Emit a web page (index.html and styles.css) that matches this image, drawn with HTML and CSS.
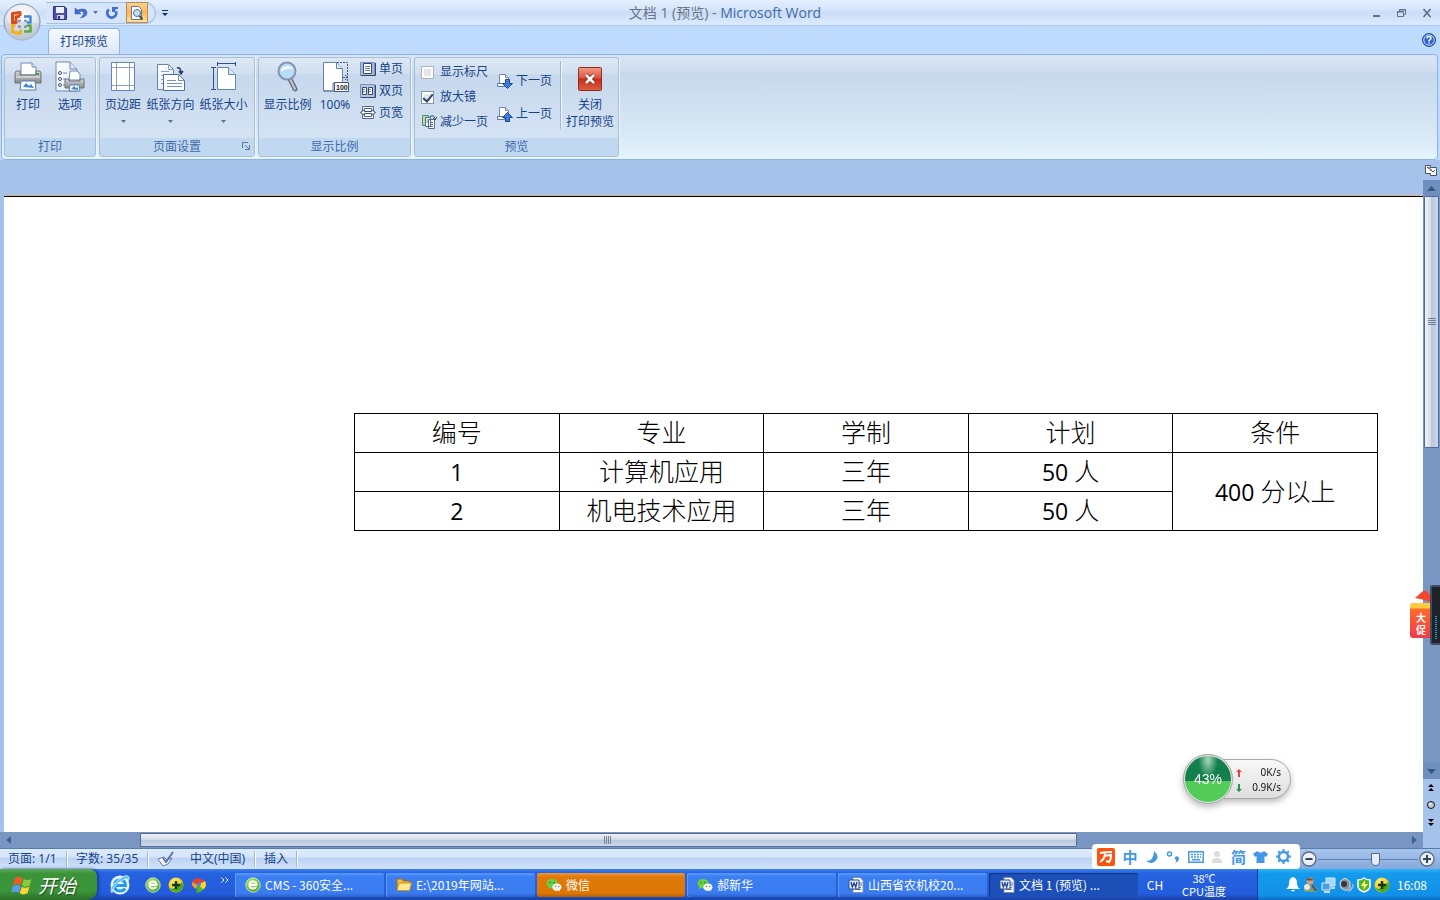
FILE: index.html
```html
<!DOCTYPE html>
<html lang="zh-CN">
<head>
<meta charset="utf-8">
<title>文档 1 (预览) - Microsoft Word</title>
<link rel="stylesheet" href="styles.css">
</head>
<body>
<svg class="defs" aria-hidden="true">
  <defs>
    <linearGradient id="paper" x1="0" y1="0" x2="1" y2="1"><stop offset="0" stop-color="#fff"/><stop offset="1" stop-color="#dfe8f6"/></linearGradient>
    <linearGradient id="metal" x1="0" y1="0" x2="0" y2="1"><stop offset="0" stop-color="#d9d9da"/><stop offset="1" stop-color="#86888d"/></linearGradient>
    <linearGradient id="redbox" x1="0" y1="0" x2="0" y2="1"><stop offset="0" stop-color="#f19a84"/><stop offset=".45" stop-color="#dd5540"/><stop offset=".5" stop-color="#c82d1b"/><stop offset="1" stop-color="#dc6040"/></linearGradient>
    <radialGradient id="orb" cx=".5" cy=".3" r=".7"><stop offset="0" stop-color="#fff"/><stop offset=".6" stop-color="#e3e7ee"/><stop offset="1" stop-color="#a7b4c8"/></radialGradient>
    <radialGradient id="lime" cx=".4" cy=".3" r=".8"><stop offset="0" stop-color="#b8ee70"/><stop offset="1" stop-color="#3c9e1e"/></radialGradient>
    <radialGradient id="gold" cx=".4" cy=".3" r=".8"><stop offset="0" stop-color="#fff36a"/><stop offset="1" stop-color="#dcae00"/></radialGradient>
    <symbol id="i-printer" viewBox="0 0 32 32">
      <path d="M9 2h11l4 4v8H9z" fill="#fff" stroke="#7188b5"/><path d="M20 2v4h4" fill="#dce6f5" stroke="#7188b5"/>
      <path d="M3 12q0-2 2-2h3v4h16v-4h3q2 0 2 2v10H3z" fill="url(#metal)" stroke="#707276"/>
      <path d="M4 16h24" stroke="#eee"/><path d="M24 13h3" stroke="#3b9e37" stroke-width="2"/>
      <path d="M9 20h14l1 9H8z" fill="#fff" stroke="#5579ad"/><path d="M11 26l3-4 3 3 2-2 3 4z" fill="#3d8ad2"/>
    </symbol>
    <symbol id="i-options" viewBox="0 0 32 32">
      <path d="M2 1h14l7 7v22H2z" fill="url(#paper)" stroke="#7188b5"/><path d="M16 1v7h7" fill="#dce6f5" stroke="#7188b5"/>
      <g fill="#fff" stroke="#44516e"><circle cx="6" cy="12" r="1.5"/><circle cx="6" cy="18" r="1.5"/><circle cx="6" cy="24" r="1.5"/></g>
      <path d="M9 12h4M9 18h3M9 24h3" stroke="#7188b5"/>
      <path d="M16 10h7l3 3v6H15z" fill="#fff" stroke="#7188b5"/><path d="M11 18h4v2h11v-2h4v9H11z" fill="url(#metal)" stroke="#707276"/><path d="M16 24h9l1 6H15z" fill="#fff" stroke="#5579ad"/><path d="M17 28l3-3 2 2 2-1v3z" fill="#3d8ad2"/>
    </symbol>
    <symbol id="i-margins" viewBox="0 0 32 32">
      <path d="M4.500 1.500h23v28h-23z" fill="#fff" stroke="#6583b5"/><path d="M9.500 2v27M22.500 2v27M5 6.500h22M5 24.500h22" stroke="#8aa0c8"/>
    </symbol>
    <symbol id="i-orient" viewBox="0 0 32 32">
      <path d="M2.500 3.500h11l5 5v20h-16z" fill="url(#paper)" stroke="#6583b5"/><path d="M13.500 3.500v5h5M6 10.500h8M6 14.500h3M6 18.500h2M6 22.500h2" fill="none" stroke="#8aa0c8"/>
      <path d="M8.500 13.500h15l6 6v10h-21z" fill="#fff" stroke="#4f6da5"/><path d="M23.500 13.500v6h6M12 19.500h9M12 22.500h15M12 25.500h15" fill="none" stroke="#7890bd"/>
      <path d="M22 7q4-1 4 5M24 10l2 3 2-3" fill="none" stroke="#273d70" stroke-width="1.500"/>
    </symbol>
    <symbol id="i-size" viewBox="0 0 32 32">
      <path d="M9.500 6.500h11l7 7v15h-18z" fill="#fff" stroke="#6583b5"/><path d="M20.500 6.500v7h7" fill="#dce6f5" stroke="#6583b5"/>
      <path d="M9 2.500h19M9.500 1v4M27.500 1v4M5.500 6v23M3 6.500h5M3 28.500h5" stroke="#334f87"/>
    </symbol>
    <symbol id="i-zoom" viewBox="0 0 32 32">
      <path d="M18 18l5 10" stroke="#68717c" stroke-width="5" stroke-linecap="round"/><path d="M18 18l5 10" stroke="#bec8d2" stroke-width="2" stroke-linecap="round"/>
      <circle cx="15" cy="10" r="8.500" fill="#b9dcf7" stroke="#8294b0" stroke-width="2"/><path d="M9 11q0-6 7-6 4 0 5 3-7-1-12 3z" fill="#f3faff"/>
    </symbol>
    <symbol id="i-100" viewBox="0 0 32 32">
      <path d="M4.500 30V1.500h13l6 6V22H14v8z" fill="#fff" stroke="#6583b5"/><path d="M17.500 1.500v6h6" fill="#dce6f5" stroke="#6583b5"/>
      <path d="M18 1.500h10.500V22M5 30h11M24 16.500h5M26 14l3 2-3 3" fill="none" stroke="#43587f" stroke-dasharray="2 1"/>
      <path d="M15.500 21.500h14v9h-14z" fill="#fff" stroke="#43587f"/><text x="17" y="29" font-size="7" font-weight="700" font-family="Liberation Sans" fill="#222">100</text>
    </symbol>
    <symbol id="i-one" viewBox="0 0 16 16"><path d="M.5 1.500h14v13H.5z" fill="#a8bddd" stroke="#7a92bb"/><path d="M1 14.500h14.500V2" fill="none" stroke="#35486f"/><path d="M3.500 2.500h8v10h-8z" fill="#fff" stroke="#35486f"/><path d="M5 5.500h5M5 7.500h5M5 9.500h5" stroke="#667da8"/></symbol>
    <symbol id="i-two" viewBox="0 0 16 16"><path d="M.5 1.500h14v13H.5z" fill="#b4c7e4" stroke="#7a92bb"/><path d="M1 14.500h14.500V2" fill="none" stroke="#35486f"/><path d="M2.500 4.500h4v7h-4zM8.500 4.500h4v7h-4z" fill="#fff" stroke="#35486f"/><path d="M3 6.500h2M3 8.500h2M9 6.500h2M9 8.500h2" stroke="#667da8"/></symbol>
    <symbol id="i-wide" viewBox="0 0 16 16"><path d="M2.500 1.500h11v12h-11z" fill="#fff" stroke="#536e9d"/><path d="M4 3.500h8M4 11.500h8" stroke="#536e9d"/><path d="M.5 7.500l4-3v2h7v-2l4 3-4 3v-2h-7v2z" fill="#f6faff" stroke="#35486f"/></symbol>
    <symbol id="i-shrink" viewBox="0 0 16 16"><path d="M1.500 1.500h6v10h-6z" fill="#b5dfa9" stroke="#55875c"/><path d="M4.500 3.500h5v9h-5zM7.500 5.500h6v9h-6z" fill="#fff" stroke="#506b97"/><path d="M9 8.500h3M9 10.500h3M9 12.500h3M5.500 6h2M5.500 8h2" stroke="#506b97"/><path d="M9 2.500q4-2 5 2M12 4l2 2 2-3" fill="none" stroke="#253961"/></symbol>
    <symbol id="i-next" viewBox="0 0 16 16"><path d="M2.500 1.500h6l3 3v7h-9z" fill="#fff" stroke="#7188b5"/><path d="M8.500 1.500v3h3" fill="#dce6f5" stroke="#7188b5"/><path d="M.5 10.500h7v3h-7z" fill="#fff" stroke="#5879af"/><path d="M8.500 6.500h4v4h3L10.500 15.500 5.500 10.500h3z" fill="#3f7bd4" stroke="#174a9c"/></symbol>
    <symbol id="i-prev" viewBox="0 0 16 16"><path d="M2.500 1.500h6l3 3v7h-9z" fill="#fff" stroke="#7188b5"/><path d="M8.500 1.500v3h3" fill="#dce6f5" stroke="#7188b5"/><path d="M.5 10.500h7v3h-7z" fill="#fff" stroke="#5879af"/><path d="M8.500 15.500h4v-4h3L10.500 6.500 5.500 11.500h3z" fill="#3f7bd4" stroke="#174a9c"/></symbol>
    <symbol id="i-close" viewBox="0 0 24 24"><rect x=".5" y=".5" width="23" height="23" rx="1" fill="url(#redbox)" stroke="#8e2c20"/><path d="M8 8l8 8M16 8l-8 8" stroke="#7b2216" stroke-width="4"/><path d="M8 8l8 8M16 8l-8 8" stroke="#fff" stroke-width="2.500"/></symbol>
    <symbol id="i-down" viewBox="0 0 5 3"><path d="M0 0h5L2.500 3z" fill="currentColor"/></symbol>
    <symbol id="i-ecircle" viewBox="0 0 16 16"><circle cx="8" cy="8" r="7.200" fill="url(#lime)" stroke="#d9f5c0" stroke-width=".8"/><path d="M4.500 8h7q0-3.500-3.500-3.500T4.500 8 8 11.500q2 0 3.200-1.500" fill="none" stroke="#fff" stroke-width="2"/></symbol>
    <symbol id="i-plus" viewBox="0 0 16 16"><circle cx="8" cy="8" r="7.500" fill="url(#gold)"/><path d="M1 10q4 5 13-5 3 6-2 9-7 3-11-4z" fill="#47a71d"/><path d="M8 4v8M4 8h8" stroke="#17350f" stroke-width="2.500"/></symbol>
    <symbol id="i-wechat" viewBox="0 0 16 16"><path d="M6 2C2.500 2 .5 4.200.5 6.500c0 1.600 1 2.800 2 3.500L2 12l2-1c5 1 7.500-1.500 7.500-4.500S9 2 6 2z" fill="#69d044"/><path d="M11 6.500c-2.800 0-4.700 1.700-4.700 3.700s2 3.700 4.700 3.700l1.600-.3 1.600.9-.4-1.500c1-.7 1.700-1.700 1.700-2.800 0-2-1.900-3.700-4.500-3.700z" fill="#f4f6f3"/><g fill="#287420"><circle cx="4" cy="5.500" r=".8"/><circle cx="8" cy="5.500" r=".8"/></g><g fill="#777"><circle cx="9.500" cy="9.500" r=".7"/><circle cx="12.700" cy="9.500" r=".7"/></g></symbol>
    <symbol id="i-word" viewBox="0 0 16 16"><path d="M5 .5h7l3 3v12H5z" fill="#fff" stroke="#7e92b6"/><path d="M11 6h3M11 8h3M7 12.500h6M7 10.500h6" stroke="#58719d"/><path d="M1 3h10v9H1z" fill="#e9effa" stroke="#2c4c8d"/><path d="M3 5l1.300 5L6 6l1.700 4L9 5" fill="none" stroke="#193f8d" stroke-width="1.300"/></symbol>
    <symbol id="i-folder" viewBox="0 0 16 16"><path d="M1 13V2h5l1.500 2H14v9z" fill="#f2bd3d" stroke="#9c7116"/><path d="M1 13.500L3 6h12.500l-2 7.500z" fill="#ffe98e" stroke="#c59427"/></symbol>
  </defs>
</svg>

<header class="titlebar">
  <div class="qat">
    <button aria-label="保存"><svg width="14" height="14" viewBox="0 0 14 14"><path d="M.5.5h11l2 2v11H.5z" fill="#4c50b0" stroke="#29307f"/><path d="M3 1h8v6H3z" fill="#edf2ff"/><path d="M4 9h7v4H4z" fill="#d5d9e8"/><path d="M5 10h2v3H5z" fill="#29307f"/></svg></button>
    <button aria-label="撤消"><svg width="14" height="14" viewBox="0 0 14 14"><path d="M1 2v6h6L5 6q5-2 4.500 2-.5 2-3 4 6-1 6.500-5Q13 1 3.500 4z" fill="#3f6fd0" stroke="#2d54a9" stroke-width=".5"/></svg></button>
    <button class="tiny" aria-label="撤消选项"><svg class="caret"><use href="#i-down"/></svg></button>
    <button class="redo" aria-label="恢复"><svg width="14" height="14" viewBox="0 0 14 14"><path d="M4 3.500A4.500 4.500 0 1 0 11 5.500" fill="none" stroke="#4270cf" stroke-width="2.800"/><path d="M7 1h6v2h-2.500v3L7 6z" fill="#4270cf"/></svg></button>
    <button class="active" aria-label="打印预览"><svg width="16" height="16" viewBox="0 0 16 16"><path d="M2.500 1.500h7l3 3v10h-10z" fill="#fff" stroke="#68758f"/><circle cx="8" cy="8" r="3.500" fill="#c5e1f5" stroke="#4f6787"/><path d="M10.500 11l3 3.500" stroke="#424d60" stroke-width="2"/></svg></button>
  </div>
  <button class="qat-more" aria-label="自定义快速访问工具栏"><svg width="6" height="8" viewBox="0 0 6 8"><path d="M0 1.500h6" stroke="currentColor"/><path d="M0 4h6L3 7z" fill="currentColor"/></svg></button>
  <h1>文档 1 (预览) - <span>Microsoft Word</span></h1>
  <div class="winbtns">
    <button aria-label="最小化"><svg width="10" height="10" viewBox="0 0 10 10"><path d="M1 8h7" stroke="currentColor" stroke-width="2"/></svg></button>
    <button aria-label="还原"><svg width="10" height="10" viewBox="0 0 10 10"><path d="M.5 3.500h6v5h-6zM2.500 3V1.500h6v5H7M0 4h7M2 2h7" fill="none" stroke="currentColor"/></svg></button>
    <button aria-label="关闭"><svg width="10" height="10" viewBox="0 0 10 10"><path d="M1.500 1l7 8M8.500 1l-7 8" stroke="currentColor" stroke-width="1.800"/></svg></button>
  </div>
  <button class="orb" aria-label="Office 按钮"><svg width="38" height="38" viewBox="0 0 38 38"><circle cx="19" cy="19" r="18" fill="url(#orb)" stroke="#8292ae"/><path d="M2 21a17 17 0 0 0 34 0q-17-5-34 0z" fill="#c6cddb" opacity=".6"/>
    <g fill="none" stroke-linejoin="round"><path d="M17 13V9.500l-7.500 1v9H13v-5.500l4-1" stroke="#dc4b16" stroke-width="3"/><path d="M21 13.500h6.500v6H24" stroke="#3f86d9" stroke-width="2.400"/><path d="M12.500 22.500H9.500v6.500l8 1.500v-4" stroke="#efb219" stroke-width="2.800"/><path d="M21 28.500h6.500v-6H24" stroke="#5aac3c" stroke-width="2.600"/><path d="M16 19.500v-2h2M21 17.500h2v2M16 22v2h2M21 24h2v-2" stroke="#6c83b8" stroke-width="1.500"/></g></svg></button>
</header>

<nav class="tabs"><button class="tab">打印预览</button>
  <button class="help" aria-label="帮助"><svg width="14" height="14" viewBox="0 0 14 14"><circle cx="7" cy="7" r="6.500" fill="#2c62c9" stroke="#234d9f"/><circle cx="7" cy="7" r="5.200" fill="none" stroke="#c7dcff"/><path d="M5 5.500q0-2 2-2t2 1.700Q9 6.500 7 7.500v1M7 9.500v1.300" fill="none" stroke="#fff" stroke-width="1.500"/></svg></button>
</nav>

<section class="ribbon">
  <div class="group">
    <div class="tools">
      <button class="big w42"><svg><use href="#i-printer"/></svg>打印</button>
      <button class="big w42"><svg><use href="#i-options"/></svg>选项</button>
    </div>
    <h2>打印</h2>
  </div>
  <div class="group">
    <div class="tools">
      <button class="big w42"><svg><use href="#i-margins"/></svg>页边距<svg class="caret"><use href="#i-down"/></svg></button>
      <button class="big w52"><svg><use href="#i-orient"/></svg>纸张方向<svg class="caret"><use href="#i-down"/></svg></button>
      <button class="big w52"><svg><use href="#i-size"/></svg>纸张大小<svg class="caret"><use href="#i-down"/></svg></button>
    </div>
    <h2>页面设置</h2>
    <button class="launcher" aria-label="页面设置对话框"><svg width="8" height="8" viewBox="0 0 8 8"><path d="M.5 6V.5H6M3 3l4 4M7.500 3v4.500H3" fill="none" stroke="currentColor"/></svg></button>
  </div>
  <div class="group">
    <div class="tools">
      <button class="big w52"><svg><use href="#i-zoom"/></svg>显示比例</button>
      <button class="big w42"><svg><use href="#i-100"/></svg>100%</button>
      <div class="stack three">
        <button class="small"><svg><use href="#i-one"/></svg>单页</button>
        <button class="small"><svg><use href="#i-two"/></svg>双页</button>
        <button class="small"><svg><use href="#i-wide"/></svg>页宽</button>
      </div>
    </div>
    <h2>显示比例</h2>
  </div>
  <div class="group">
    <div class="tools">
      <div class="stack checks">
        <label class="small"><input type="checkbox">显示标尺</label>
        <label class="small"><input type="checkbox" checked>放大镜</label>
        <button class="small"><svg><use href="#i-shrink"/></svg>减少一页</button>
      </div>
      <div class="stack pager">
        <button class="small"><svg><use href="#i-next"/></svg>下一页</button>
        <button class="small"><svg><use href="#i-prev"/></svg>上一页</button>
      </div>
      <button class="big closer"><svg><use href="#i-close"/></svg>关闭<br>打印预览</button>
    </div>
    <h2>预览</h2>
  </div>
</section>

<main class="workspace">
  <div class="docarea">
    <article class="page">
      <table>
        <thead><tr><th>编号</th><th>专业</th><th>学制</th><th>计划</th><th>条件</th></tr></thead>
        <tbody>
          <tr><td><span>1</span></td><td>计算机应用</td><td>三年</td><td><span>50 </span>人</td><td rowspan="2"><span>400 </span>分以上</td></tr>
          <tr><td><span>2</span></td><td>机电技术应用</td><td>三年</td><td><span>50 </span>人</td></tr>
        </tbody>
      </table>
    </article>
    <div class="hscroll">
      <button aria-label="向左滚动"><svg width="5" height="8" viewBox="0 0 5 8"><path d="M5 0v8L0 4z" fill="currentColor"/></svg></button>
      <div class="htrack"><div class="hthumb"><i></i></div></div>
      <button aria-label="向右滚动"><svg width="5" height="8" viewBox="0 0 5 8"><path d="M0 0v8l5-4z" fill="currentColor"/></svg></button>
    </div>
  </div>
  <aside class="vscroll">
    <button class="ruler" aria-label="标尺"><svg width="12" height="12" viewBox="0 0 12 12"><path d="M.5 1.500h5v2h6v8h-6v-2h-5z" fill="#fff" stroke="#4b5062"/><path d="M2 4l1-1 1 2M6 6l2 2 2-2M5 3v3h2" fill="none" stroke="#4b5062"/></svg></button>
    <button class="arrow" aria-label="向上滚动"><svg width="9" height="5" viewBox="0 0 9 5"><path d="M0 5h9L4.500 0z" fill="currentColor"/></svg></button>
    <div class="vtrack"><div class="vthumb"><i></i></div></div>
    <button class="arrow" aria-label="向下滚动"><svg width="9" height="5" viewBox="0 0 9 5"><path d="M0 0h9L4.500 5z" fill="currentColor"/></svg></button>
    <div class="browse">
      <button aria-label="前一页"><svg width="6" height="8" viewBox="0 0 6 8"><path d="M3 0l3 3H0zM3 4l3 3H0z"/></svg></button>
      <button aria-label="选择浏览对象"><svg width="8" height="8" viewBox="0 0 8 8"><circle cx="4" cy="4" r="3.500" fill="#c2c8d0" stroke="#111"/><circle cx="3" cy="3" r="1" fill="#fff"/></svg></button>
      <button aria-label="后一页"><svg width="6" height="8" viewBox="0 0 6 8"><path d="M3 4l3-3H0zM3 8l3-3H0z"/></svg></button>
    </div>
  </aside>
</main>

<footer class="status">
  <span class="s-page">页面: 1/1</span><span class="s-words">字数: 35/35</span>
  <span class="s-proof"><svg width="18" height="16" viewBox="0 0 18 16"><path d="M1 8l6-2 3 3 5-2-4 6-5 2z" fill="#fff" stroke="#66799c"/><path d="M6 7l3 4 7-10" fill="none" stroke="#5876be" stroke-width="2"/></svg></span>
  <span class="s-lang">中文(中国)</span><span class="s-ins">插入</span>
  <div class="zoomer">
    <button aria-label="缩小"><svg width="16" height="16" viewBox="0 0 16 16"><circle cx="8" cy="8" r="7" fill="#eaf1fb" stroke="#5b6b84" stroke-width="1.300"/><path d="M4.500 8h7" stroke="#33435d" stroke-width="2"/></svg></button>
    <input type="range" min="0" max="100" value="58" aria-label="显示比例">
    <button aria-label="放大"><svg width="16" height="16" viewBox="0 0 16 16"><circle cx="8" cy="8" r="7" fill="#eaf1fb" stroke="#5b6b84" stroke-width="1.300"/><path d="M4 8h8M8 4v8" stroke="#33435d" stroke-width="2"/></svg></button>
  </div>
</footer>

<nav class="taskbar">
  <button class="start"><svg width="22" height="20" viewBox="0 0 19 18"><path d="M3 3q4-3 7 0L8.500 9q-3-2-7 0z" fill="#ee5a28"/><path d="M11 3.500q3 2 7 0L16.500 9.500q-4 2-7 0z" fill="#8acb3b"/><path d="M1.300 10q4-2 7 0L7 16q-3-2-7 0z" fill="#5b9bf2"/><path d="M9.300 10.500q3 2 7 0L14.500 16.500q-4 2-7 0z" fill="#fdd238"/></svg>开始</button>
  <div class="quick">
    <button aria-label="Internet Explorer"><svg width="22" height="22" viewBox="0 0 22 22"><circle cx="11" cy="11" r="9.500" fill="#e6f5ff"/><path d="M6 11.500h10.500q0-5.500-5.500-5.500T5.500 11.500 11 17q3.500 0 5-2.500" fill="none" stroke="#259ce9" stroke-width="3"/><path d="M3 19Q-1 14 9 6q9-7 11-3 1 2-1 4 0-3-3-2Q7 9 4 15q-1 3-1 4z" fill="#5ec1f8" stroke="#e9f7ff" stroke-width=".7"/></svg></button>
    <div class="minis">
    <button aria-label="360浏览器"><svg class="i16"><use href="#i-ecircle"/></svg></button>
    <button aria-label="360安全卫士"><svg class="i16"><use href="#i-plus"/></svg></button>
    <button aria-label="桌面助手"><svg width="16" height="16" viewBox="0 0 16 16"><path d="M1 4q6-6 13 1L7 8z" fill="#e6432c"/><path d="M14 4q3 6-3 9L7 8z" fill="#ffd51f"/><path d="M12 12q-3 5-7 3l2-7z" fill="#48b82f"/><path d="M1 5l6 3-2 4Q0 9 1 5z" fill="#ff9b21"/><circle cx="8" cy="7.500" r="2" fill="#408ded"/></svg></button>
    </div>
    <button class="chev" aria-label="更多"><svg width="8" height="6" viewBox="0 0 8 6"><path d="M.5.500L3 3 .5 5.500M4.500.500L7 3 4.500 5.500" fill="none" stroke="#fff"/></svg></button>
  </div>
  <div class="tasks">
    <button><svg class="i16"><use href="#i-ecircle"/></svg>CMS - 360安全...</button>
    <button><svg class="i16"><use href="#i-folder"/></svg>E:\2019年网站...</button>
    <button class="alert"><svg class="i16"><use href="#i-wechat"/></svg>微信</button>
    <button><svg class="i16"><use href="#i-wechat"/></svg>郝新华</button>
    <button><svg class="i16"><use href="#i-word"/></svg>山西省农机校20...</button>
    <button class="current"><svg class="i16"><use href="#i-word"/></svg>文档 1 (预览) ...</button>
  </div>
  <div class="lang">CH</div>
  <div class="temp"><span>38℃</span><span>CPU温度</span></div>
  <div class="tray">
    <svg width="14" height="15" viewBox="0 0 14 15"><path d="M7 0q4 1 4 6 0 4 3 6H0q3-2 3-6 0-5 4-6zM5 13h4q-2 3-4 0z" fill="#fff"/></svg>
    <svg width="15" height="16" viewBox="0 0 15 16"><circle cx="7" cy="4" r="3.500" fill="#cda381"/><path d="M3 3q2-4 8 0-4 1-8 0z" fill="#7d4c36"/><path d="M1 15q0-8 6-8t7 8z" fill="#799f83"/><circle cx="4" cy="10" r="3" fill="#eee4dc"/><path d="M9 8l4 6" stroke="#564d59" stroke-width="2"/></svg>
    <svg width="15" height="16" viewBox="0 0 15 16"><path d="M5 1h9v8H5z" fill="#9cdaff" stroke="#dce7f5"/><path d="M1 6h8v7H1z" fill="#469fe0" stroke="#e1ebf7"/><path d="M3 15h6M10 11h4" stroke="#ced8e5" stroke-width="2"/></svg>
    <svg width="15" height="16" viewBox="0 0 15 16"><path d="M1 5q5-7 10 0v5q-2 6-9 1z" fill="#8d9096" stroke="#ddd"/><circle cx="5" cy="7" r="3" fill="#34383d"/><path d="M11 14q4-3 3-7M9 15q3-2 4-5" fill="none" stroke="#bfd0de"/></svg>
    <svg width="14" height="16" viewBox="0 0 14 16"><path d="M7 1q3 2 6 2v6q0 4-6 6-6-2-6-6V3q3 0 6-2z" fill="#54b82d" stroke="#fff" stroke-width="1.500"/><path d="M8 3L4 9h3l-1 4 5-6H8z" fill="#fff482"/></svg>
    <svg class="i16"><use href="#i-plus"/></svg>
    <time>16:08</time>
  </div>
</nav>

<div class="ime">
  <svg width="18" height="18" viewBox="0 0 18 18"><rect width="18" height="18" rx="2" fill="#fb5410"/><path d="M3 5q6-1 12-1M8 5q0 6-5 9M7 8l7-1q0 5-2 7l-3-1" fill="none" stroke="#fff" stroke-width="2"/></svg>
  <b>中</b>
  <svg width="14" height="14" viewBox="0 0 14 14"><path d="M9 1q6 5 2 9.500Q7 15 1 11q8 0 8-10z" fill="#4298e5"/></svg>
  <svg width="14" height="14" viewBox="0 0 14 14"><circle cx="3.500" cy="4" r="2" fill="none" stroke="#4298e5" stroke-width="1.500"/><path d="M9 7q3-2 4 1 0 4-4 5 2-2 1-3-2-1-1-3z" fill="#4298e5"/></svg>
  <svg width="16" height="12" viewBox="0 0 16 12"><rect x=".8" y=".8" width="14.400" height="10.400" fill="none" stroke="#4298e5" stroke-width="1.500"/><path d="M3 3.500h10M3 6h10" stroke="#4298e5" stroke-width="1.500" stroke-dasharray="2 1"/><path d="M4 8.700h8" stroke="#4298e5" stroke-width="1.500"/></svg>
  <svg width="12" height="14" viewBox="0 0 12 14"><circle cx="6" cy="4" r="3" fill="#dcdcdc"/><path d="M1 13V11q1-3 5-3t5 3v2z" fill="#dcdcdc"/></svg>
  <b>简</b>
  <svg width="15" height="14" viewBox="0 0 15 14"><path d="M4 1q3.500 3 7 0l4 3-2 3-1.500-1v7h-8V6L2 7 0 4z" fill="#4298e5"/></svg>
  <svg width="15" height="15" viewBox="0 0 15 15"><circle cx="7.500" cy="7.500" r="4.500" fill="none" stroke="#4298e5" stroke-width="2.500"/><path d="M7.500 0v3M7.500 12v3M0 7.500h3M12 7.500h3M2.200 2.200l2 2M10.800 10.800l2 2M12.800 2.200l-2 2M4.200 10.800l-2 2" stroke="#4298e5" stroke-width="2"/></svg>
</div>

<div class="meter">
  <div class="ball">43%</div>
  <div class="rates">
    <p><svg width="6" height="8" viewBox="0 0 6 8"><path d="M3 0l3 3H4v5H2V3H0z" fill="#e54343"/></svg>0K/s</p>
    <p><svg width="6" height="8" viewBox="0 0 6 8"><path d="M3 8l3-3H4V0H2v5H0z" fill="#259449"/></svg>0.9K/s</p>
  </div>
</div>

<div class="promo">
  <svg width="17" height="13" viewBox="0 0 17 13"><path d="M1 8L9 1q3-2 7 4v7Q8 9 1 8z" fill="#f4452e"/></svg>
  <button>大<br>促</button>
</div>
<div class="gauge"><i></i></div>
</body>
</html>
```
FILE: styles.css
```css
* { box-sizing: border-box; }
body {
  margin: 0; min-height: 100vh; display: flex; flex-direction: column; overflow: hidden; position: relative;
  background: #bfdbff; color: #15428b;
  font: 12px/16px "Noto Sans", "Noto Sans CJK SC", sans-serif;
}
button { border: 0; padding: 0; margin: 0; background: none; color: inherit; font: inherit; display: flex; align-items: center; justify-content: center; white-space: nowrap; }
h1, h2, p { margin: 0; font-weight: 400; }
svg { display: block; flex: none; }
.defs { position: absolute; width: 0; height: 0; }
.i16 { width: 16px; height: 16px; }
.caret { width: 5px; height: 3px; color: #58719d; }

/* title bar */
.titlebar { position: relative; height: 26px; display: flex; align-items: center; padding-left: 46px; background: linear-gradient(#e4efff, #d7e6fb 35%, #cbddf6 50%, #dbebff); border-bottom: 1px solid #b1cbf0; }
.qat { display: flex; align-items: center; gap: 3px; height: 22px; width: 110px; padding-left: 5px; border: 1px solid #a5bfe5; border-left: 0; border-radius: 0 11px 11px 0; background: #d6e5f9; }
.qat button { width: 18px; height: 21px; }
.qat .tiny { width: 5px; }
.qat .redo { width: 22px; }
.qat .active { width: 22px; border: 1px solid #b98d4a; background: linear-gradient(#fbd29a, #ffb455 50%, #ffe29a); }
.qat-more { width: 18px; height: 20px; color: #15325f; }
.titlebar h1 { flex: 1; text-align: center; font: 14px/26px "Open Sans", "Noto Sans CJK SC", sans-serif; font-size: 13px; color: #6a7485; padding-right: 96px; word-break: keep-all; }
.titlebar h1 { font-size: 14px; }
.titlebar h1 span { color: #3e6aaa; }
.winbtns { display: flex; gap: 15px; padding-right: 8px; color: #62728c; }
.orb { position: absolute; left: 3px; top: 3px; z-index: 2; border-radius: 50%; }

/* tabs */
.tabs { height: 28px; display: flex; align-items: flex-end; justify-content: space-between; padding: 0 4px 0 48px; }
.tab { width: 72px; height: 26px; border: 1px solid #8db2e3; border-bottom: 0; border-radius: 4px 4px 0 0; background: linear-gradient(#f5f9ff, #dce8f8); }
.help { align-self: center; }

/* ribbon */
.ribbon { display: flex; gap: 3px; margin: 0 2px 0 1px; padding: 2px; height: 106px; border: 1px solid #8db2e3; border-radius: 4px; background: linear-gradient(#dbe6f4, #cfddef 16%, #c7d8ed 17%, #d8e8f5 75%, #e3f5fd); }
.group { position: relative; display: flex; flex-direction: column; border: 1px solid #a5bfdb; border-radius: 3px; box-shadow: 1px 1px 0 #edf6ff; overflow: hidden; background: linear-gradient(#dee8f5, #d1dff0 16%, #c7d8ed 17%, #d8e6f5); }
.tools { flex: 1; display: flex; padding: 3px 4px 0 2px; }
.group h2 { height: 18px; line-height: 18px; font-size: 12px; text-align: center; background: #c1d8f1; color: #3e6aaa; }
.launcher { position: absolute; right: 4px; bottom: 6px; color: #5877a5; }
.big { flex-direction: column; justify-content: flex-start; align-items: center; line-height: 17px; }
.big > svg:first-child { width: 32px; height: 32px; margin-bottom: 3px; }
.big > .caret { margin-top: 7px; }
.w42 { width: 42px; }
.w52 { width: 53px; }
.stack { display: flex; flex-direction: column; }
.small { display: flex; align-items: center; justify-content: flex-start; gap: 3px; }
.small svg { width: 16px; height: 16px; }
.stack.three { gap: 6px; padding: 0 3px 0 4px; }
.stack.checks { gap: 9px; padding: 3px 9px 0 4px; }
.stack.pager { gap: 17px; padding: 12px 8px 0 0; }
.checks .small { gap: 6px; }
.checks button.small { gap: 3px; }
.checks input { appearance: none; width: 13px; height: 13px; margin: 0; border: 1px solid #a9b4c5; background: #e4e6ea; box-shadow: inset 0 0 0 2px #fff; display: grid; place-items: center; }
.checks input:checked { border-color: #8497b5; }
.checks input:checked::before { content: ""; width: 4px; height: 8px; border: solid #31466e; border-width: 0 2px 2px 0; rotate: 40deg; }
.closer { border-left: 1px solid #9ab6d9; box-shadow: inset 1px 0 #eef6ff; padding: 6px 0 0 5px; height: 68px; text-align: center; }
.closer > svg:first-child { width: 24px; height: 24px; margin-bottom: 5px; }

/* document */
.workspace { flex: 1; display: flex; min-height: 0; background: #a5c2ea; }
.docarea { flex: 1; display: flex; flex-direction: column; padding: 36px 0 0 4px; }
.page { flex: 1; background: #fff; border-top: 1px solid #000; box-shadow: 0 -1px #d9b78b; padding: 216px 45px 0 350px; color: #000; }
table { width: 100%; border-collapse: collapse; table-layout: fixed; font: 300 25px/34px "Noto Sans CJK SC", sans-serif; text-align: center; }
th, td { border: 1px solid #000; padding: 0 0 4px; font-weight: 300; height: 39px; }
td span { font: 400 23px/24px "Open Sans", sans-serif; }
.hscroll { height: 16px; display: flex; background: #7896c1; margin-left: -4px; color: #3f5f8f; }
.hscroll button { width: 17px; }
.htrack { flex: 1; padding: 1px 0 0 123px; }
.hthumb { width: 74%; height: 14px; }
.hthumb, .vthumb { border: 1px solid #516b96; border-radius: 1px; display: grid; place-items: center; }
.hthumb { background: linear-gradient(#eef1f6, #d5dce8 45%, #bac7dc 50%, #cdd8e9); }
.hthumb i { width: 8px; height: 8px; background: repeating-linear-gradient(90deg, #71829f 0 1px, transparent 1px 2px); }
.vscroll { width: 17px; display: flex; flex-direction: column; }
.ruler { height: 20px; padding-right: 2px; }
.arrow { height: 16px; background: #6f8fbf; color: #365784; }
.vtrack { flex: 1; background: #7896c1; padding-left: 1px; }
.vthumb { width: 15px; height: 252px; background: linear-gradient(90deg, #eef1f6, #d5dce8 45%, #bac7dc 50%, #cdd8e9); }
.vthumb i { width: 8px; height: 8px; background: repeating-linear-gradient(#71829f 0 1px, transparent 1px 2px); }
.browse { height: 69px; display: flex; flex-direction: column; gap: 9px; padding: 5px 2px 0 0; }

/* status bar */
.status { display: flex; align-items: center; height: 21px; background: linear-gradient(#dceaff, #d6e5f9 40%, #bdd3f3 45%, #d1e2fa); border-top: 1px solid #567db0; }
.status span { height: 16px; border-right: 1px solid #9ab6df; box-shadow: 1px 0 #fff; }
.s-page { width: 67px; padding-left: 8px; }
.s-words { width: 81px; padding-left: 9px; }
.status .s-proof { width: 34px; padding-left: 9px; border: 0; box-shadow: none; }
.s-lang { width: 73px; padding-left: 8px; }
.s-ins { width: 42px; padding-left: 9px; }
.zoomer { margin-left: auto; display: flex; align-items: center; gap: 1px; padding: 0 5px; background: linear-gradient(#a9c5ec, #86a8dc); height: 100%; }
.zoomer input { appearance: none; width: 100px; height: 16px; margin: 0; background: linear-gradient(#5d7fb4, #5d7fb4) center / 100% 1px no-repeat; }
.zoomer input::-webkit-slider-thumb { appearance: none; width: 9px; height: 13px; border: 1px solid #50698f; background: #e5edf9; border-radius: 1px 1px 5px 5px; }

/* taskbar */
.taskbar { height: 31px; display: flex; color: #fff; background: linear-gradient(#3b83f0, #2663e0 12%, #235cdc 80%, #1941a5); font-family: "Noto Sans CJK SC", sans-serif; }
.start { width: 97px; gap: 5px; padding-right: 10px; background: linear-gradient(#5eac56, #3c933a 15%, #3b963a 70%, #2a6f29); border-radius: 0 8px 10px 0; font-size: 19px; font-style: italic; text-shadow: 1px 1px 1px #1b4a1a; box-shadow: 2px 0 3px #173f9d; }
.quick { display: flex; align-items: center; width: 138px; padding-left: 12px; gap: 14px; }
.minis { display: flex; gap: 7px; }
.quick .chev { align-self: flex-start; padding-top: 8px; }
.tasks { flex: 1; display: flex; gap: 2px; padding: 4px 0 3px; max-width: 903px; }
.tasks button { flex: 1; min-width: 0; justify-content: flex-start; gap: 4px; padding-left: 10px; border-radius: 2px; background: linear-gradient(#5a99fb, #3c7ff3 15%, #3a7bf0 85%, #2c62cc); box-shadow: inset 1px 0 #5f9cfb; }
.tasks .alert { background: linear-gradient(#f09a3c, #e27a0a 15%, #dd7605 85%, #b65e00); box-shadow: none; padding-left: 9px; }
.tasks .current { background: #1c4fb8; box-shadow: inset 1px 1px 1px #123680; }
.lang { width: 34px; line-height: 32px; text-align: center; }
.temp { width: 64px; display: flex; flex-direction: column; align-items: center; font-size: 11px; line-height: 13px; padding-top: 3px; }
.tray { display: flex; align-items: center; gap: 3px; margin-left: auto; padding: 0 13px 0 28px; border-left: 1px solid #0a3f97; background: linear-gradient(#2db3f6, #149aec 15%, #1290e8 85%, #0d6cc0); }
.tray time { padding-left: 4px; }

/* floating desktop widgets */
.ime { position: absolute; right: 140px; bottom: 31px; height: 25px; width: 208px; padding: 0 9px 0 5px; display: flex; align-items: center; justify-content: space-between; border-radius: 4px; background: #fff; color: #4298e5; font-size: 15px; }
.ime b { font-weight: 700; }
.meter { position: absolute; right: 149px; bottom: 96px; display: flex; align-items: center; filter: drop-shadow(0 3px 3px #0004); }
.ball { width: 50px; height: 50px; border-radius: 50%; border: 2px solid #dfe5e1; outline: 1px solid #a1a8a4; outline-offset: -1px; background: radial-gradient(ellipse at 50% 8%, #a8d9bc, transparent 30%), linear-gradient(#13804c 0 55%, #54cc58 55%); color: #fff; font: 14px/46px "Liberation Sans", sans-serif; text-align: center; z-index: 1; }
.rates { width: 84px; height: 40px; margin-left: -26px; padding: 5px 9px 0 28px; border: 1px solid #aaa; border-radius: 0 20px 20px 0; background: linear-gradient(#f8f8f8, #dedede); color: #111; font-size: 10px; line-height: 15px; }
.rates p { display: flex; align-items: center; justify-content: space-between; }
.promo { position: absolute; right: 8px; top: 590px; width: 22px; }
.promo svg { margin-left: 4px; }
.promo button { width: 100%; height: 35px; border-radius: 3px; background: linear-gradient(#ffcb3c 0 5px, #ff6a2b 6px, #f23a48); color: #fff; font-size: 10px; font-weight: 700; line-height: 12px; padding-top: 6px; }
.gauge { position: absolute; right: 0; top: 585px; width: 10px; height: 60px; border: 2px solid #414d5c; border-right: 0; border-radius: 3px 0 0 3px; background: #1d2329; display: flex; align-items: flex-end; padding: 3px; }
.gauge i { width: 4px; height: 24px; background: repeating-linear-gradient(#2aa0d0 0 1px, transparent 1px 2px); }
```
